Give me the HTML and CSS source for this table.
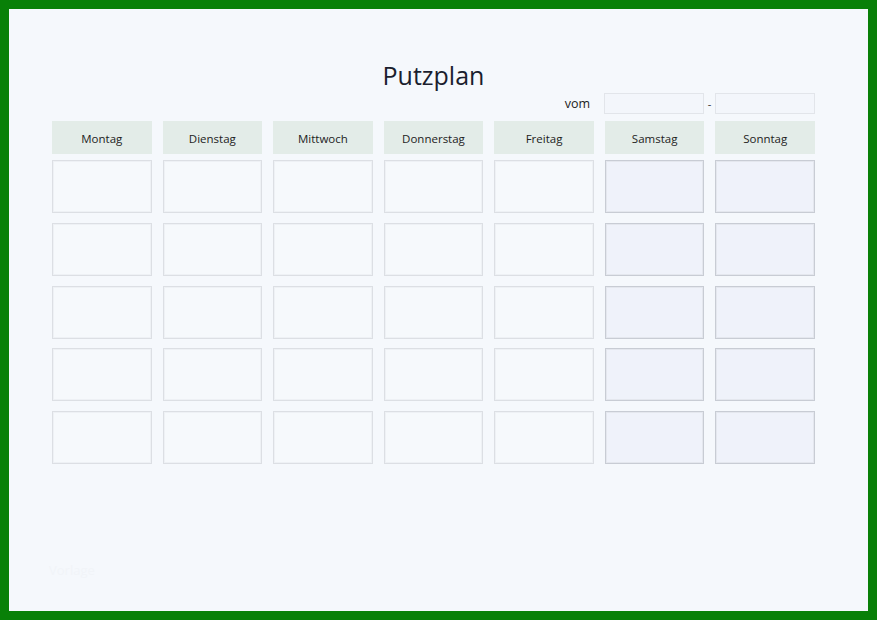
FILE: index.html
```html
<!DOCTYPE html>
<html lang="de">
<head>
<meta charset="utf-8">
<title>Putzplan</title>
<link rel="stylesheet" href="styles.css">
</head>
<body>
<div class="frame">
  <div class="sheet">
    <h1 class="title">Putzplan</h1>
    <div class="daterow">
      <span class="vom">vom</span>
      <span class="datebox"></span>
      <span class="dash">-</span>
      <span class="datebox"></span>
    </div>
    <div class="grid">
      <div class="head">Montag</div>
      <div class="head">Dienstag</div>
      <div class="head">Mittwoch</div>
      <div class="head">Donnerstag</div>
      <div class="head">Freitag</div>
      <div class="head">Samstag</div>
      <div class="head">Sonntag</div>
    </div>
    <div class="grid body">
      <div class="cell"></div><div class="cell"></div><div class="cell"></div><div class="cell"></div><div class="cell"></div><div class="cell we"></div><div class="cell we"></div>
      <div class="cell"></div><div class="cell"></div><div class="cell"></div><div class="cell"></div><div class="cell"></div><div class="cell we"></div><div class="cell we"></div>
      <div class="cell"></div><div class="cell"></div><div class="cell"></div><div class="cell"></div><div class="cell"></div><div class="cell we"></div><div class="cell we"></div>
      <div class="cell"></div><div class="cell"></div><div class="cell"></div><div class="cell"></div><div class="cell"></div><div class="cell we"></div><div class="cell we"></div>
      <div class="cell"></div><div class="cell"></div><div class="cell"></div><div class="cell"></div><div class="cell"></div><div class="cell we"></div><div class="cell we"></div>
    </div>
    <div class="mark">Vorlage</div>
  </div>
</div>
</body>
</html>
```

FILE: styles.css
```css
* { box-sizing: border-box; }
html, body { margin: 0; padding: 0; }
body {
  width: 877px;
  height: 620px;
  font-family: "Open Sans", "Noto Sans", sans-serif;
  color: #1f2330;
}
.frame {
  width: 877px;
  height: 620px;
  border: 9px solid #088008;
  background: #f5f8fc;
}
.sheet {
  width: 763px;
  margin-left: 43px;
  padding-top: 49px;
  position: relative;
  height: 100%;
}
.title {
  margin: 0;
  text-align: center;
  font-weight: 400;
  font-size: 25px;
  line-height: 34px;
  color: #1b1e2e;
  letter-spacing: 0;
}
.daterow {
  display: flex;
  justify-content: flex-end;
  align-items: center;
  height: 21px;
  margin-top: 1px;
}
.vom {
  font-size: 12.5px;
  margin-right: 14px;
  color: #222;
}
.datebox {
  width: 100px;
  height: 21px;
  background: #f3f6fb;
  border: 1px solid #e2e5ea;
}
.dash {
  width: 11px;
  text-align: center;
  font-size: 11px;
  color: #333;
}
.grid {
  display: grid;
  grid-template-columns: repeat(7, 1fr);
  column-gap: 11px;
}
.grid:not(.body) { margin-top: 7px; }
.head {
  height: 33px;
  padding-top: 2px;
  background: #e3ece8;
  display: flex;
  align-items: center;
  justify-content: center;
  font-size: 11.5px;
  color: #222;
}
.body {
  margin-top: 6px;
  grid-auto-rows: 53px;
  row-gap: 9.75px;
}
.cell {
  background: #f6f9fc;
  border: 1px solid #dcdfe4;
  box-shadow: inset 0 0 0 1px #eef1f5;
}
.cell.we {
  background: #eff2fa;
  border-color: #c8ccd4;
  box-shadow: inset 0 0 0 1px #e4e7ee;
}
.mark {
  position: absolute;
  left: -3px;
  top: 552px;
  font-size: 13px;
  color: #f1f4f8;
}
```
